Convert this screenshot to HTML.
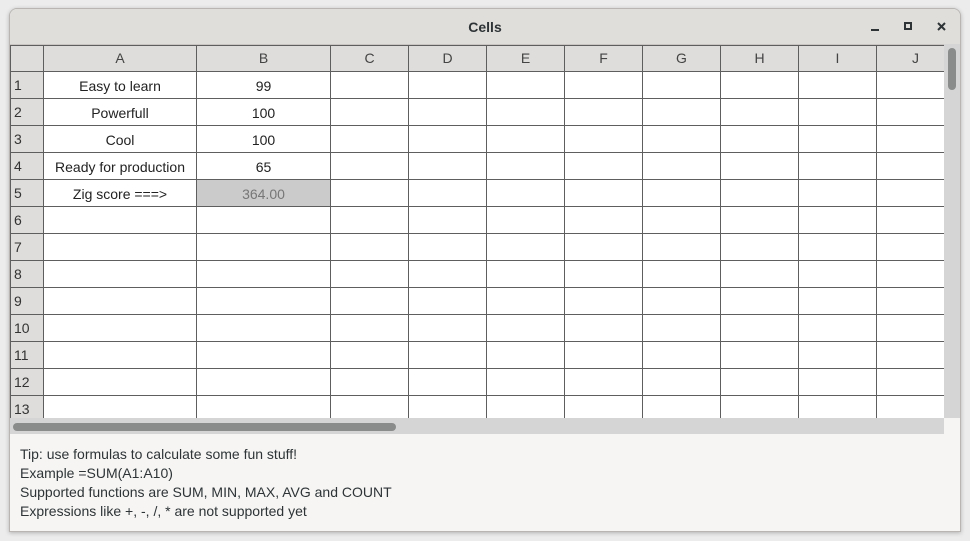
<!DOCTYPE html>
<html><head><meta charset="utf-8"><style>
*{margin:0;padding:0;box-sizing:border-box}
body{width:970px;height:541px;background:#ececec;position:relative;overflow:hidden;font-family:"Liberation Sans","DejaVu Sans",sans-serif;color:#2e3436}
.win{position:absolute;left:9px;top:8px;width:952px;height:524px;background:#f6f5f4;border:1px solid #b8b5b2;border-radius:8px 8px 0 0;overflow:hidden;box-shadow:0 1px 4px rgba(0,0,0,.25)}
.title{position:absolute;left:0;top:0;width:100%;height:36px;background:#e0dedb;border-bottom:1px solid #c8c5c2;text-align:center;font-weight:bold;font-size:14px;line-height:36px;color:#2e3436}
.grid{position:absolute;left:10px;top:45px;width:934px;height:373px;background:#fff;overflow:hidden}
.hdr{position:absolute;top:0;height:27px;background:#dedddb}
.rh{position:absolute;left:0;width:33px;background:#dedddb}
.v{position:absolute;top:0;width:1px;height:374px;background:#5e5e5e}
.h{position:absolute;left:0;height:1px;width:934px;background:#5e5e5e}
.t{position:absolute;font-size:14px;line-height:27px;text-align:center;color:#222}
.n{position:absolute;left:4px;font-size:14px;line-height:27px;color:#333}
.tip{position:absolute;left:20px;top:445px;font-size:14px;line-height:19px;color:#2e3436}
</style></head><body>
<div class="win">
<div class="title">Cells</div>
<div style="position:absolute;right:81px;top:20px;width:8px;height:2px;background:#2e3436"></div>
<div style="position:absolute;right:48px;top:13px;width:8px;height:8px;border:2px solid #2e3436"></div>
<svg style="position:absolute;right:14px;top:13px" width="9" height="9" viewBox="0 0 9 9"><path d="M1 1L8 8M8 1L1 8" stroke="#2e3436" stroke-width="2"/></svg>
</div>
<div class="grid">
<div class="hdr" style="left:0;width:934px"></div>
<div class="rh" style="top:27px;height:347px"></div>
<div style="position:absolute;left:187px;top:135px;width:133px;height:27px;background:#cbcbcb"></div>
<div class="v" style="left:0"></div><div class="v" style="left:33px"></div><div class="v" style="left:186px"></div><div class="v" style="left:320px"></div><div class="v" style="left:398px"></div><div class="v" style="left:476px"></div><div class="v" style="left:554px"></div><div class="v" style="left:632px"></div><div class="v" style="left:710px"></div><div class="v" style="left:788px"></div><div class="v" style="left:866px"></div>
<div class="h" style="top:0"></div><div class="h" style="top:26px"></div><div class="h" style="top:53px"></div><div class="h" style="top:80px"></div><div class="h" style="top:107px"></div><div class="h" style="top:134px"></div><div class="h" style="top:161px"></div><div class="h" style="top:188px"></div><div class="h" style="top:215px"></div><div class="h" style="top:242px"></div><div class="h" style="top:269px"></div><div class="h" style="top:296px"></div><div class="h" style="top:323px"></div><div class="h" style="top:350px"></div>
<div class="t" style="left:34px;width:152px;top:0;color:#444">A</div>
<div class="t" style="left:187px;width:133px;top:0;color:#444">B</div>
<div class="t" style="left:321px;width:77px;top:0;color:#444">C</div>
<div class="t" style="left:399px;width:77px;top:0;color:#444">D</div>
<div class="t" style="left:477px;width:77px;top:0;color:#444">E</div>
<div class="t" style="left:555px;width:77px;top:0;color:#444">F</div>
<div class="t" style="left:633px;width:77px;top:0;color:#444">G</div>
<div class="t" style="left:711px;width:77px;top:0;color:#444">H</div>
<div class="t" style="left:789px;width:77px;top:0;color:#444">I</div>
<div class="t" style="left:867px;width:77px;top:0;color:#444">J</div>
<div class="n" style="top:27px">1</div><div class="n" style="top:54px">2</div><div class="n" style="top:81px">3</div><div class="n" style="top:108px">4</div><div class="n" style="top:135px">5</div><div class="n" style="top:162px">6</div><div class="n" style="top:189px">7</div><div class="n" style="top:216px">8</div><div class="n" style="top:243px">9</div><div class="n" style="top:270px">10</div><div class="n" style="top:297px">11</div><div class="n" style="top:324px">12</div><div class="n" style="top:351px">13</div>
<div class="t" style="left:34px;width:152px;top:28px">Easy to learn</div>
<div class="t" style="left:34px;width:152px;top:55px">Powerfull</div>
<div class="t" style="left:34px;width:152px;top:82px">Cool</div>
<div class="t" style="left:34px;width:152px;top:109px">Ready for production</div>
<div class="t" style="left:34px;width:152px;top:136px">Zig score ===&gt;</div>
<div class="t" style="left:187px;width:133px;top:28px">99</div>
<div class="t" style="left:187px;width:133px;top:55px">100</div>
<div class="t" style="left:187px;width:133px;top:82px">100</div>
<div class="t" style="left:187px;width:133px;top:109px">65</div>
<div class="t" style="left:187px;width:133px;top:136px;color:#777">364.00</div>
</div>
<div style="position:absolute;left:10px;top:418px;width:934px;height:16px;background:#d5d5d5"></div>
<div style="position:absolute;left:13px;top:423px;width:383px;height:8px;background:#8a8c8c;border-radius:4px"></div>
<div style="position:absolute;left:944px;top:44px;width:16px;height:374px;background:#d5d5d5"></div>
<div style="position:absolute;left:948px;top:48px;width:8px;height:42px;background:#8a8c8c;border-radius:4px"></div>
<div class="tip">Tip: use formulas to calculate some fun stuff!<br>Example =SUM(A1:A10)<br>Supported functions are SUM, MIN, MAX, AVG and COUNT<br>Expressions like +, -, /, * are not supported yet</div>
</body></html>
